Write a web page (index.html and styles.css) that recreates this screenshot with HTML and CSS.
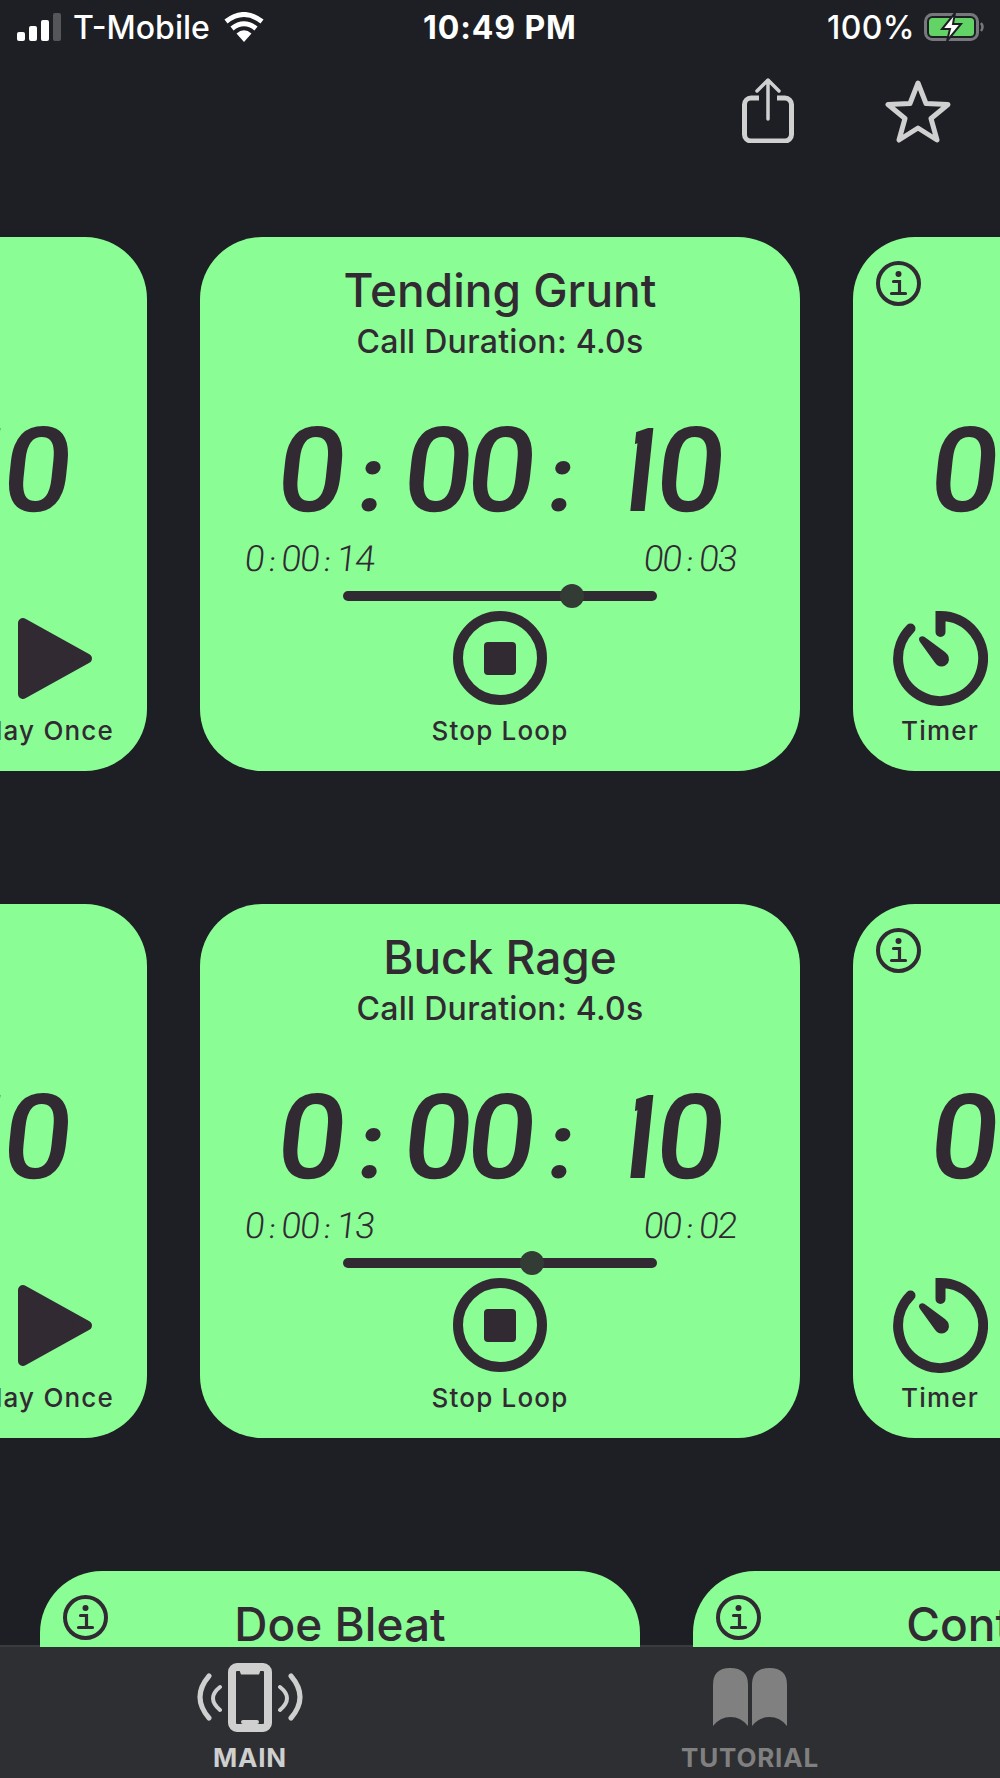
FILE: index.html
```html
<!DOCTYPE html>
<html lang="en">

<head>
    <meta charset="UTF-8">
    <meta name="viewport" content="width=device-width, initial-scale=1.0">
    <title>Deer Calls</title>
    <link rel="stylesheet" href="styles.css">
</head>

<body>
    <svg class="icon-defs" width="0" height="0">
        <symbol id="icon-info" viewBox="0 0 45 45">
            <circle cx="22.5" cy="22.5" r="20.5" fill="none" stroke="currentColor" stroke-width="4" />
            <circle cx="22.5" cy="13" r="3" fill="currentColor" />
            <path d="M17.5 20.5h6v12M15.5 32.5h14" fill="none" stroke="currentColor" stroke-width="3.2" stroke-linecap="round" />
        </symbol>
        <symbol id="icon-stop" viewBox="0 0 94 94">
            <circle cx="47" cy="47" r="42" fill="none" stroke="currentColor" stroke-width="10" />
            <rect x="31" y="31" width="32" height="33" rx="4" fill="currentColor" />
        </symbol>
        <symbol id="icon-timer" viewBox="0 0 95 95">
            <path d="M47.5 21V5A42.5 42.5 0 1 1 17.500 17.500" fill="none" stroke="currentColor" stroke-width="10" stroke-linecap="round" />
            <path d="M27 26 Q30 24 33 27 L52 41 Q58 46 55 52 Q50 58 44 54 Q42 52 40 49 L27 31 Q25 28 27 26Z" fill="currentColor" />
        </symbol>
        <symbol id="icon-play" viewBox="0 0 95 95">
            <path d="M24 12 88 47.500 24 83Z" fill="currentColor" stroke="currentColor" stroke-width="10" stroke-linejoin="round" />
        </symbol>
    </svg>

    <!-- Status bar -->
    <header class="status-bar">
        <div class="status-left">
            <div class="signal">
                <span class="signal-bar signal-1"></span>
                <span class="signal-bar signal-2"></span>
                <span class="signal-bar signal-3"></span>
                <span class="signal-bar signal-4"></span>
            </div>
            <span class="carrier">T-Mobile</span>
            <svg class="wifi" viewBox="0 0 40 30">
                <path d="M20 30 12.500 21.500Q20 15 27.500 21.500Z" fill="#fff" />
                <path d="M8 16.500Q20 7 32 16.500" fill="none" stroke="#fff" stroke-width="5" />
                <path d="M2 9.500Q20 -4.500 38 9.500" fill="none" stroke="#fff" stroke-width="5" />
            </svg>
        </div>
        <span class="clock">10:49 PM</span>
        <div class="status-right">
            <span class="percent">100%</span>
            <svg class="battery" viewBox="0 0 60 28">
                <rect x="1.5" y="1.5" width="52" height="25" rx="7" fill="none" stroke="#77787b" stroke-width="3" />
                <rect x="5" y="5" width="45" height="18" rx="3.5" fill="#62d465" />
                <path d="M57 10q3 4 0 8" fill="none" stroke="#77787b" stroke-width="2.5" />
                <path d="M31 0 18 16h8l-3 12 14-17h-8z" fill="#fff" stroke="#1e1f24" stroke-width="2" />
            </svg>
        </div>
    </header>

    <!-- Share and favourite -->
    <div class="top-actions">
        <svg class="share-icon" viewBox="0 0 52 66">
            <path d="M17 21H9a6.500 6.500 0 0 0-6.500 6.500v30A6.500 6.500 0 0 0 9 64h34a6.500 6.500 0 0 0 6.500-6.500v-30A6.500 6.500 0 0 0 43 21h-8" fill="none" stroke="currentColor" stroke-width="5" />
            <path d="M26 42V3M15 14 26 3l11 11" fill="none" stroke="currentColor" stroke-width="3.500" stroke-linecap="round" stroke-linejoin="round" />
        </svg>
        <svg class="star-icon" viewBox="0 0 66 64">
            <path d="M33 4 41 24.500 63 25.500 46 39.500 52 61 33 49 14 61 20 39.500 3 25.500 25 24.500Z" fill="none" stroke="currentColor" stroke-width="5" stroke-linejoin="round" />
        </svg>
    </div>

    <main class="call-list">
        <!-- Tending Grunt -->
        <section class="card-row">
            <article class="card">
                <div class="card-head"></div>
                <div class="lcd lcd-large">0<span class="lcd-sep">:</span>00<span class="lcd-sep">:</span><span class="lcd-one">1</span>0</div>
                <div class="controls controls-end">
                    <div class="control control-play">
                        <svg class="control-icon"><use href="#icon-play" /></svg>
                        <span class="control-label">Play Once</span>
                    </div>
                </div>
            </article>
            <article class="card">
                <div class="card-head">
                    <h2 class="card-title">Tending Grunt</h2>
                    <p class="card-duration">Call Duration: 4.0s</p>
                </div>
                <div class="lcd lcd-large">0<span class="lcd-sep">:</span>00<span class="lcd-sep">:</span><span class="lcd-one">1</span>0</div>
                <div class="lcd-row">
                    <span class="lcd lcd-small">0<span class="lcd-sep">:</span>00<span class="lcd-sep">:</span>14</span>
                    <span class="lcd lcd-small">00<span class="lcd-sep">:</span>03</span>
                </div>
                <div class="slider">
                    <span class="slider-thumb thumb-grunt"></span>
                </div>
                <div class="controls controls-center">
                    <div class="control">
                        <svg class="control-icon control-icon-stop"><use href="#icon-stop" /></svg>
                        <span class="control-label">Stop Loop</span>
                    </div>
                </div>
            </article>
            <article class="card">
                <svg class="info-icon"><use href="#icon-info" /></svg>
                <div class="card-head"></div>
                <div class="lcd lcd-large">0<span class="lcd-sep">:</span>00<span class="lcd-sep">:</span><span class="lcd-one">1</span>0</div>
                <div class="controls controls-start">
                    <div class="control control-timer">
                        <svg class="control-icon"><use href="#icon-timer" /></svg>
                        <span class="control-label">Timer</span>
                    </div>
                </div>
            </article>
        </section>

        <!-- Buck Rage -->
        <section class="card-row">
            <article class="card">
                <div class="card-head"></div>
                <div class="lcd lcd-large">0<span class="lcd-sep">:</span>00<span class="lcd-sep">:</span><span class="lcd-one">1</span>0</div>
                <div class="controls controls-end">
                    <div class="control control-play">
                        <svg class="control-icon"><use href="#icon-play" /></svg>
                        <span class="control-label">Play Once</span>
                    </div>
                </div>
            </article>
            <article class="card">
                <div class="card-head">
                    <h2 class="card-title">Buck Rage</h2>
                    <p class="card-duration">Call Duration: 4.0s</p>
                </div>
                <div class="lcd lcd-large">0<span class="lcd-sep">:</span>00<span class="lcd-sep">:</span><span class="lcd-one">1</span>0</div>
                <div class="lcd-row">
                    <span class="lcd lcd-small">0<span class="lcd-sep">:</span>00<span class="lcd-sep">:</span>13</span>
                    <span class="lcd lcd-small">00<span class="lcd-sep">:</span>02</span>
                </div>
                <div class="slider">
                    <span class="slider-thumb thumb-rage"></span>
                </div>
                <div class="controls controls-center">
                    <div class="control">
                        <svg class="control-icon control-icon-stop"><use href="#icon-stop" /></svg>
                        <span class="control-label">Stop Loop</span>
                    </div>
                </div>
            </article>
            <article class="card">
                <svg class="info-icon"><use href="#icon-info" /></svg>
                <div class="card-head"></div>
                <div class="lcd lcd-large">0<span class="lcd-sep">:</span>00<span class="lcd-sep">:</span><span class="lcd-one">1</span>0</div>
                <div class="controls controls-start">
                    <div class="control control-timer">
                        <svg class="control-icon"><use href="#icon-timer" /></svg>
                        <span class="control-label">Timer</span>
                    </div>
                </div>
            </article>
        </section>

        <!-- Third row, cut off by the tab bar -->
        <section class="card-row card-row-offset">
            <article class="card">
                <svg class="info-icon"><use href="#icon-info" /></svg>
                <div class="card-head">
                    <h2 class="card-title">Doe Bleat</h2>
                </div>
            </article>
            <article class="card">
                <svg class="info-icon"><use href="#icon-info" /></svg>
                <div class="card-head">
                    <h2 class="card-title">Contact</h2>
                </div>
            </article>
        </section>
    </main>

    <!-- Tab bar -->
    <nav class="tab-bar">
        <div class="tab tab-active">
            <svg class="tab-icon" viewBox="0 0 106 70">
                <rect x="35" y="4" width="36" height="61" rx="5" fill="none" stroke="currentColor" stroke-width="8" />
                <path d="M42 6h22l-2 5.500H44z" fill="currentColor" />
                <rect x="44" y="57" width="18" height="4" rx="2" fill="currentColor" />
                <path d="M12 13Q-6 34 12 55M94 13Q112 34 94 55" fill="none" stroke="currentColor" stroke-width="5" stroke-linecap="round" />
                <path d="M23 24Q9 35 23 47M83 24Q97 35 83 47" fill="none" stroke="currentColor" stroke-width="4" stroke-linecap="round" />
            </svg>
            <span class="tab-label">MAIN</span>
        </div>
        <div class="tab">
            <svg class="tab-icon" viewBox="0 0 106 70">
                <path d="M16 63V22Q16 5 33 5 51 5 51 22V63Q44 54 33.500 54 23 54 16 63Z" fill="currentColor" />
                <path d="M55 63V22Q55 5 72.500 5 90 5 90 22V63Q83 54 72.500 54 62 54 55 63Z" fill="currentColor" />
            </svg>
            <span class="tab-label">TUTORIAL</span>
        </div>
    </nav>
</body>

</html>
```

FILE: styles.css
```css
* {
    box-sizing: border-box;
}

html,
body {
    margin: 0;
    padding: 0;
}

body {
    display: flex;
    flex-direction: column;
    height: 1778px;
    overflow: hidden;
    background-color: #1e1f24;
    font-family: Inter, "Liberation Sans", sans-serif;
    color: #322a33;
}

.icon-defs {
    position: absolute;
}

/* Status bar */
.status-bar {
    display: flex;
    flex: 0 0 54px;
    align-items: center;
    justify-content: space-between;
    position: relative;
    padding: 0 16px 0 17px;
    color: #fff;
    font-size: 32px;
    font-weight: 500;
}

.status-left,
.status-right {
    display: flex;
    align-items: center;
}

.signal {
    display: flex;
    align-items: flex-end;
    gap: 4px;
    height: 28px;
    margin-right: 12px;
}

.signal-bar {
    width: 8px;
    background: #fff;
    border-radius: 2px;
}

.signal-1 {
    height: 9px;
}

.signal-2 {
    height: 15px;
}

.signal-3 {
    height: 21px;
}

.signal-4 {
    height: 28px;
    background: #55565a;
}

.wifi {
    width: 40px;
    height: 30px;
    margin-left: 14px;
}

.clock {
    position: absolute;
    left: 423px;
    font-weight: 700;
    letter-spacing: 0.9px;
}

.percent {
    letter-spacing: 0.4px;
}

.battery {
    width: 60px;
    height: 28px;
    margin-left: 9px;
}

/* Share and star */
.top-actions {
    display: flex;
    flex: 0 0 183px;
    justify-content: flex-end;
    align-items: flex-start;
    gap: 91px;
    padding: 23px 49px 0 0;
    color: #d0d0d0;
}

.share-icon {
    width: 52px;
    height: 66px;
}

.star-icon {
    width: 66px;
    height: 64px;
    margin-top: 2px;
}

/* Cards */
.call-list {
    flex: 1;
    overflow: hidden;
    display: flex;
    flex-direction: column;
    gap: 133px;
}

.card-row {
    display: flex;
    flex: 0 0 534px;
    gap: 53px;
    margin-left: -453px;
}

.card-row-offset {
    margin-left: 40px;
}

.card {
    display: flex;
    flex: 0 0 600px;
    flex-direction: column;
    position: relative;
    height: 534px;
    background-color: #8bfd95;
    border-radius: 62px;
}

.info-icon {
    position: absolute;
    top: 24px;
    left: 23px;
    width: 45px;
    height: 45px;
}

.card-head {
    flex: 0 0 125px;
    padding-top: 22px;
    text-align: center;
}

.card-title {
    margin: 0;
    font-size: 46px;
    font-weight: 500;
    line-height: 62px;
}

.card-duration {
    margin: 1px 0 0;
    font-size: 32px;
    font-weight: 500;
    line-height: 40px;
    letter-spacing: 0.3px;
}

/* LCD readouts */
.lcd {
    white-space: nowrap;
    font-family: Roboto, "Liberation Sans", sans-serif;
    transform: skewX(-6deg);
}

.lcd-large {
    margin: 66px 0 0 78px;
    height: 87px;
    font-size: 118px;
    font-weight: 500;
    line-height: 87px;
    letter-spacing: -5.500px;
    transform: skewX(-6deg) scaleX(1.03);
    transform-origin: 0 50%;
}

.lcd-large .lcd-sep {
    display: inline-block;
    width: 61px;
    text-align: center;
    letter-spacing: 0;
    font-size: 92px;
    font-weight: 700;
}

/* the flag of the 1 goes, an LCD 1 is a plain bar */
.lcd-one {
    display: inline-block;
    width: 61px;
    margin-left: 9px;
    margin-right: -9px;
    clip-path: inset(0 0 0 28px);
}

.lcd-row {
    display: flex;
    justify-content: space-between;
    height: 26px;
    margin-top: 31px;
    padding: 0 64px 0 45px;
}

.lcd-small {
    display: block;
    font-size: 36px;
    font-weight: 300;
    line-height: 26px;
    letter-spacing: -1.4px;
}

.lcd-small .lcd-sep {
    display: inline-block;
    width: 18px;
    text-align: center;
    letter-spacing: 0;
    font-size: 26px;
    font-weight: 400;
}

.slider {
    position: relative;
    width: 314px;
    height: 10px;
    margin: 19px auto 0;
    background: #322a33;
    border-radius: 5px;
}

.slider-thumb {
    position: absolute;
    top: -7px;
    width: 24px;
    height: 24px;
    background: #333b35;
    border-radius: 50%;
}

.thumb-grunt {
    left: 217px;
}

.thumb-rage {
    left: 177px;
}

/* Buttons at the bottom of a card */
.controls {
    display: flex;
    margin-top: auto;
    padding-bottom: 25px;
}

.controls-center {
    justify-content: center;
}

.controls-end {
    justify-content: flex-end;
}

.controls-start {
    justify-content: flex-start;
}

.control {
    display: flex;
    flex-direction: column;
    align-items: center;
}

.control-play {
    width: 202px;
}

.control-timer {
    width: 174px;
}

.control-icon {
    width: 95px;
    height: 95px;
    margin-bottom: 10px;
}

.control-icon-stop {
    width: 94px;
    height: 94px;
    margin-bottom: 11px;
}

.control-label {
    font-size: 26px;
    font-weight: 500;
    line-height: 30px;
    letter-spacing: 1.2px;
    white-space: nowrap;
}

/* Tab bar */
.tab-bar {
    display: flex;
    flex: 0 0 131px;
    position: relative;
    padding-top: 16px;
    background-color: #2e2f33;
}

.tab-bar::before {
    content: "";
    position: absolute;
    top: -2px;
    left: 0;
    right: 0;
    height: 2px;
    background: #3a3b3f;
    z-index: -1;
}

.tab {
    display: flex;
    flex: 1;
    flex-direction: column;
    align-items: center;
    color: #808080;
}

.tab-active {
    color: #cfcfcf;
}

.tab-icon {
    width: 106px;
    height: 70px;
}

.tab-label {
    margin-top: 11px;
    font-size: 26px;
    font-weight: 700;
    line-height: 28px;
    letter-spacing: 0.8px;
}
```
